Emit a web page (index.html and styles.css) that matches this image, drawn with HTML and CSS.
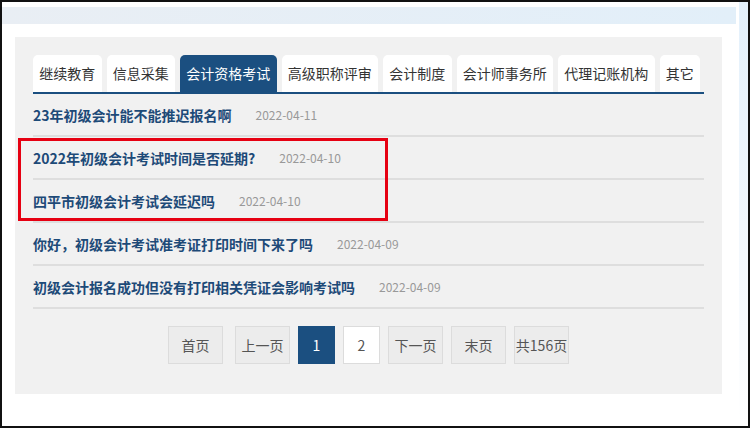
FILE: index.html
```html
<!DOCTYPE html>
<html lang="zh-CN">
<head>
    <meta charset="UTF-8">
    <title>会计资格考试</title>
    <link rel="stylesheet" href="styles.css">
</head>
<body>
    <div class="frame">
        <div class="top-band"></div>
        <div class="side-strip"></div>

        <div class="panel">
            <!-- Tabs -->
            <div class="tabs">
                <a class="tab">继续教育</a>
                <a class="tab">信息采集</a>
                <a class="tab active">会计资格考试</a>
                <a class="tab">高级职称评审</a>
                <a class="tab">会计制度</a>
                <a class="tab">会计师事务所</a>
                <a class="tab">代理记账机构</a>
                <a class="tab">其它</a>
            </div>

            <!-- List -->
            <ul class="news-list">
                <li><a class="title">23年初级会计能不能推迟报名啊</a><span class="date">2022-04-11</span></li>
                <li><a class="title">2022年初级会计考试时间是否延期?</a><span class="date">2022-04-10</span></li>
                <li><a class="title">四平市初级会计考试会延迟吗</a><span class="date">2022-04-10</span></li>
                <li><a class="title">你好，初级会计考试准考证打印时间下来了吗</a><span class="date">2022-04-09</span></li>
                <li><a class="title">初级会计报名成功但没有打印相关凭证会影响考试吗</a><span class="date">2022-04-09</span></li>
            </ul>

            <!-- Pagination -->
            <div class="pager">
                <a class="page-btn first">首页</a>
                <a class="page-btn">上一页</a>
                <a class="page-num current">1</a>
                <a class="page-num white">2</a>
                <a class="page-btn">下一页</a>
                <a class="page-btn">末页</a>
                <a class="page-btn">共156页</a>
            </div>

            <div class="highlight"></div>
        </div>
    </div>
</body>
</html>
```

FILE: styles.css
```css
* {
    box-sizing: border-box;
    margin: 0;
    padding: 0;
}

body {
    font-family: "Noto Sans CJK SC", "Microsoft YaHei", sans-serif;
    background: white;
    width: 750px;
    height: 428px;
    overflow: hidden;
}

.frame {
    position: relative;
    width: 750px;
    height: 428px;
    border: 2px solid #111;
    padding-top: 5px;
}

.top-band {
    height: 17px;
    width: 734px;
    background: linear-gradient(to right, #e9eef4, #e2eff9);
}

.side-strip {
    position: absolute;
    top: 0;
    right: 0;
    width: 9px;
    height: 100%;
    background: linear-gradient(to bottom, #e3f0fb, #f3f8fd 60%, #ffffff);
}

.panel {
    position: relative;
    margin: 13px 0 0 13px;
    width: 707px;
    height: 357px;
    background: #f1f1f1;
    padding: 18px 18px 0 18px;
}

.tabs {
    display: flex;
    gap: 5px;
    border-bottom: 2px solid #1b4f80;
}

.tab {
    display: block;
    height: 37px;
    line-height: 37px;
    padding: 0 6.25px;
    background: white;
    border-radius: 5px 5px 0 0;
    font-size: 14px;
    color: #333;
    white-space: nowrap;
}

.tab.active {
    background: #1b4f80;
    color: white;
}

.news-list {
    list-style: none;
}

.news-list li {
    display: flex;
    align-items: center;
    height: 43px;
    border-bottom: 2px solid #dedede;
}

.news-list .title {
    font-size: 14px;
    font-weight: bold;
    color: #1d4a78;
}

.news-list .date {
    margin-left: 24px;
    font-size: 12px;
    color: #999;
}

.pager {
    display: flex;
    justify-content: center;
    gap: 8px;
    margin-top: 17px;
}

.page-btn,
.page-num {
    display: block;
    height: 38px;
    line-height: 36px;
    text-align: center;
    font-size: 14px;
    color: #555;
    background: #ececec;
    border: 1px solid #dcdcdc;
    white-space: nowrap;
}

.page-btn {
    width: 55px;
}

.page-btn.first {
    margin-right: 4px;
}

.page-num {
    width: 37px;
}

.page-num.current {
    background: #1b4f80;
    border-color: #1b4f80;
    color: white;
}

.page-num.white {
    background: white;
}

.highlight {
    position: absolute;
    left: 3px;
    top: 101px;
    width: 370px;
    height: 83px;
    border: 3px solid #e60012;
}
```
